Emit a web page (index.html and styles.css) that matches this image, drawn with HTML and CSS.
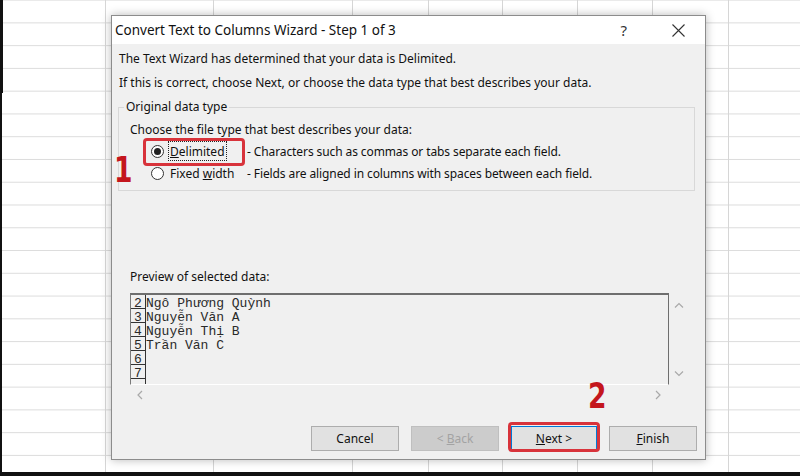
FILE: index.html
```html
<!DOCTYPE html>
<html lang="en">
<head>
<meta charset="utf-8">
<title>Convert Text to Columns Wizard</title>
<link rel="stylesheet" href="styles.css">
</head>
<body>
<div class="screen">
  <div class="sheet">
    <div class="col w1"></div>
    <div class="col w2"></div>
    <div class="col w3"></div>
    <div class="col w4"></div>
    <div class="col w5"></div>
    <div class="col w6"></div>
    <div class="col w7"></div>
    <div class="col w8"></div>
    <div class="col w9"></div>
  </div>
  <div class="selbar"></div>

  <div class="dialog">
    <div class="titlebar">
      <span class="title">Convert Text to Columns Wizard - Step 1 of 3</span>
      <span class="help">?</span>
      <svg class="close" width="13" height="13" viewBox="0 0 13 13"><path d="M0.5 0.5 L12.5 12.5 M12.5 0.5 L0.5 12.5" stroke="#333" stroke-width="1.1" fill="none"/></svg>
    </div>
    <div class="body">
      <p class="msg">The Text Wizard has determined that your data is Delimited.</p>
      <p class="msg">If this is correct, choose Next, or choose the data type that best describes your data.</p>
      <fieldset class="group">
        <legend>Original data type</legend>
        <p class="choose">Choose the file type that best describes your data:</p>
        <div class="opt">
          <span class="radio on"></span>
          <span class="optlabel"><span class="focus"><u>D</u>elimited</span></span>
          <span class="desc">- Characters such as commas or tabs separate each field.</span>
        </div>
        <div class="opt">
          <span class="radio"></span>
          <span class="optlabel">Fixed <u>w</u>idth</span>
          <span class="desc">- Fields are aligned in columns with spaces between each field.</span>
        </div>
      </fieldset>
      <p class="preview-label">Preview of selected data:</p>
      <div class="preview">
        <div class="data">
          <div class="row"><span class="num">2</span><span class="txt">Ngô Phương Quỳnh</span></div>
          <div class="row"><span class="num">3</span><span class="txt">Nguyễn Văn A</span></div>
          <div class="row"><span class="num">4</span><span class="txt">Nguyễn Thị B</span></div>
          <div class="row"><span class="num">5</span><span class="txt">Trần Văn C</span></div>
          <div class="row"><span class="num">6</span><span class="txt"></span></div>
          <div class="row"><span class="num">7</span><span class="txt"></span></div>
          <div class="row"><span class="num"></span><span class="txt"></span></div>
        </div>
        <div class="vscroll">
          <svg width="10" height="6" viewBox="0 0 10 6"><path d="M1 5.5 L5 1.5 L9 5.5" stroke="#a9a9a9" stroke-width="1.2" fill="none"/></svg>
          <svg width="10" height="6" viewBox="0 0 10 6"><path d="M1 0.5 L5 4.5 L9 0.5" stroke="#a9a9a9" stroke-width="1.2" fill="none"/></svg>
        </div>
        <div class="hscroll">
          <svg width="6" height="10" viewBox="0 0 6 10"><path d="M5 1 L1 5 L5 9" stroke="#a9a9a9" stroke-width="1.2" fill="none"/></svg>
          <svg width="6" height="10" viewBox="0 0 6 10"><path d="M1 1 L5 5 L1 9" stroke="#a9a9a9" stroke-width="1.2" fill="none"/></svg>
        </div>
        <div class="corner"></div>
      </div>
      <div class="buttons">
        <button class="btn">Cancel</button>
        <button class="btn disabled">&lt; <u>B</u>ack</button>
        <button class="btn default"><u>N</u>ext &gt;</button>
        <button class="btn"><u>F</u>inish</button>
      </div>
    </div>
  </div>

  <div class="mark mark1"></div>
  <div class="num-note note1">1</div>
  <div class="mark mark2"></div>
  <div class="num-note note2">2</div>
</div>
</body>
</html>
```

FILE: styles.css
```css
* { box-sizing: border-box; }
html, body { margin: 0; padding: 0; }
body {
  width: 800px;
  height: 476px;
  overflow: hidden;
  background: #fff;
  font-family: "Noto Sans", "Open Sans", sans-serif;
}

.screen {
  position: relative;
  width: 800px;
  height: 476px;
  overflow: hidden;
}

/* spreadsheet background */
.sheet {
  display: grid;
  grid-template-columns: 104px 108px 139px 76px 74px 75px 75px 76px 1fr;
  height: 100%;
  border-left: 2px solid #111;
  border-bottom: 4px solid #111;
  background-image: linear-gradient(to bottom, transparent 0, transparent 21.77px, #dcdcdc 21.77px, #dcdcdc 22.77px);
  background-size: 100% 22.77px;
  background-position: 0 0.6px;
}
.col { border-right: 1px solid #d6d6d6; }
.col.w9 { border-right: none; }

.selbar {
  position: absolute;
  left: 0;
  top: 0;
  width: 3px;
  height: 93px;
  background: #111;
}

/* dialog window */
.dialog {
  position: absolute;
  left: 111px;
  top: 15px;
  width: 595px;
  height: 445px;
  border: 1px solid #8c8c8c;
  background: #f0f0f0;
  box-shadow: 0 0 9px rgba(0, 0, 0, 0.28);
  display: flex;
  flex-direction: column;
  color: #111;
}

.titlebar {
  height: 28px;
  flex: none;
  background: #fff;
  display: flex;
  align-items: center;
  padding-left: 3px;
  font-size: 13.5px;
}
.title { flex: 1; color: #111; }
.help {
  font-size: 15px;
  color: #333;
  margin-right: 45px;
}
.close { margin-right: 20px; }

.body {
  flex: 1;
  display: flex;
  flex-direction: column;
  padding: 3px 0 8px 7px;
  font-size: 12px;
}

.msg {
  margin: 0;
  line-height: 24px;
  white-space: nowrap;
}

.group {
  margin: 4px 10px 0 -1px;
  padding: 5px 0 6px 11px;
  border: 1px solid #d8d8d8;
  min-inline-size: 0;
}
.group legend {
  padding: 0 2px;
  margin-left: -6px;
  line-height: 16px;
  font-size: 12px;
}
.choose {
  margin: 0;
  line-height: 20px;
}
.opt {
  display: flex;
  align-items: center;
  height: 22px;
  padding-left: 21px;
}
.radio {
  width: 13px;
  height: 13px;
  border: 1px solid #333;
  border-radius: 50%;
  background: #fff;
  margin-right: 6px;
  flex: none;
  display: flex;
  align-items: center;
  justify-content: center;
}
.radio.on::after {
  content: "";
  width: 7px;
  height: 7px;
  border-radius: 50%;
  background: #222;
}
.optlabel {
  width: 77px;
  flex: none;
  white-space: nowrap;
}
.focus {
  border: 1px dotted #222;
  padding: 1px 1px 0 1px;
  margin-left: -2px;
}
.desc { white-space: nowrap; letter-spacing: -0.1px; }

.preview-label {
  margin: 76px 0 6px 11px;
  line-height: 20px;
}

.preview {
  margin-left: 11px;
  width: 558px;
  display: grid;
  grid-template-columns: 539px 19px;
  grid-template-rows: 92px 20px;
}
.data {
  border-top: 2px solid #6e6e6e;
  border-left: 1px solid #7a7a7a;
  border-right: 1px solid #6e6e6e;
  border-bottom: 1px solid #fff;
  overflow: hidden;
  font-family: "Liberation Mono", "DejaVu Sans Mono", monospace;
  font-size: 13px;
  color: #2a2a2a;
}
.row {
  display: flex;
  height: 14px;
}
.num {
  width: 15px;
  height: 14px;
  flex: none;
  border-right: 1px solid #333;
  border-bottom: 1px solid #333;
  text-align: center;
  padding-top: 3px;
  line-height: 11px;
}
.txt {
  padding-top: 3px;
  line-height: 11px;
  white-space: pre;
}
.vscroll {
  display: flex;
  flex-direction: column;
  justify-content: space-between;
  align-items: center;
  padding: 9px 0 8px 0;
}
.hscroll {
  display: flex;
  justify-content: space-between;
  align-items: center;
  padding: 0 8px 0 7px;
}

.buttons {
  margin-top: auto;
  display: flex;
  justify-content: flex-end;
  align-items: center;
  gap: 12px;
  padding-right: 8px;
}
.btn {
  width: 88px;
  height: 25px;
  border: 1px solid #adadad;
  background: #e1e1e1;
  font-family: inherit;
  font-size: 12px;
  color: #111;
  padding: 0;
}
.btn.disabled {
  background: #cccccc;
  border-color: #bfbfbf;
  color: #a3a3a3;
}
.btn.default {
  border: 1px solid #0078d7;
  width: 86px;
}

/* red annotations */
.mark {
  position: absolute;
  border: 3px solid #d8333b;
  border-radius: 4px;
}
.mark1 { left: 143px; top: 138px; width: 102px; height: 28px; }
.mark2 { left: 508px; top: 422px; width: 92px; height: 30px; }
.num-note {
  position: absolute;
  font-family: "DejaVu Sans Condensed", "DejaVu Sans", sans-serif;
  font-weight: bold;
  font-size: 36px;
  line-height: 1;
  color: #c4161d;
  transform: scaleX(0.82);
  transform-origin: 0 0;
}
.note1 { left: 114px; top: 152px; }
.note2 { left: 588px; top: 378px; }
```
